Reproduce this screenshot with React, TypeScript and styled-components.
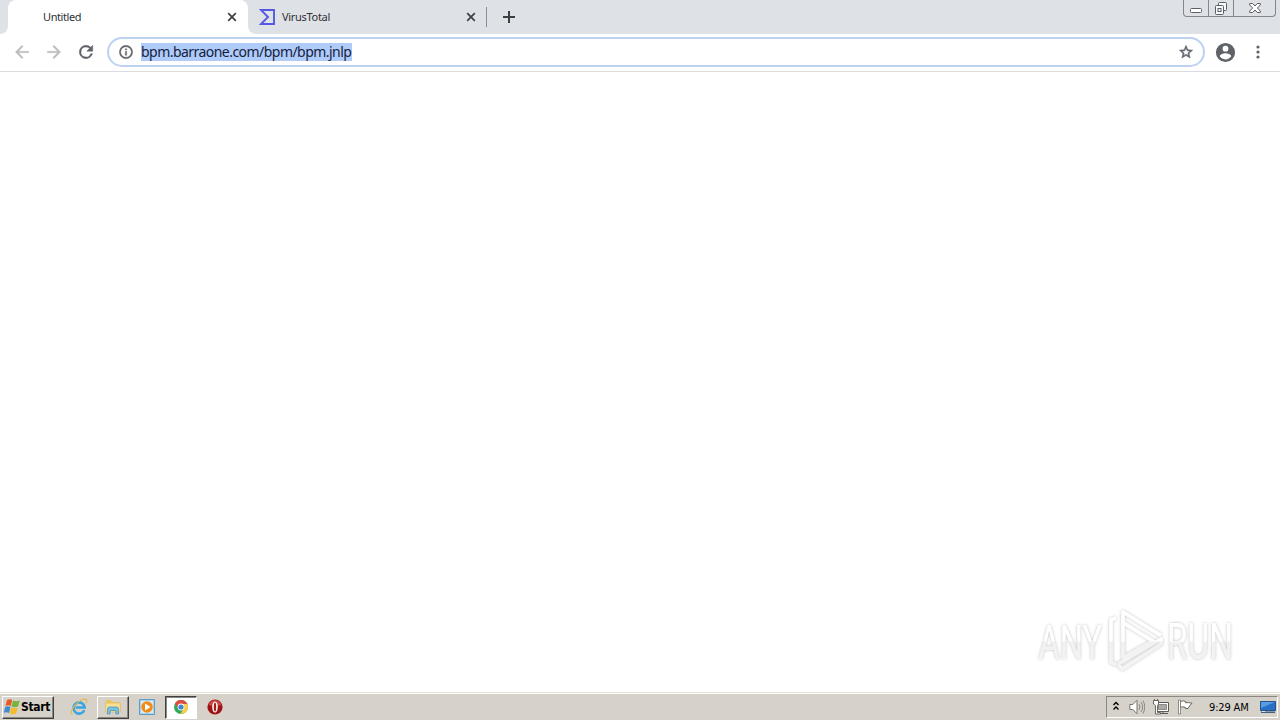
import React from 'react';
import styled, { createGlobalStyle } from 'styled-components';

const GlobalStyle = createGlobalStyle`
  * { box-sizing: border-box; }
  body { margin: 0; overflow: hidden; background: #fff; }
  svg { display: block; flex: none; }
`;

const Screen = styled.div`
  width: 1280px;
  height: 720px;
  display: flex;
  flex-direction: column;
  position: relative;
  font-family: 'Noto Sans', 'Open Sans', sans-serif;
`;

const TabStrip = styled.header`
  height: 34px;
  flex: none;
  display: flex;
  align-items: flex-start;
  background: #dee1e6;
`;

const StripEdge = styled.div`
  width: 8px;
  height: 34px;
  background: #fff;
  &::before {
    content: '';
    display: block;
    height: 34px;
    background: #dee1e6;
    border-bottom-right-radius: 8px;
  }
`;

const Tab = styled.div<{ $active?: boolean }>`
  width: ${p => (p.$active ? 240 : 239)}px;
  height: 34px;
  display: flex;
  align-items: center;
  padding: ${p => (p.$active ? '0 11px 0 35px' : '0 11px 0 11px')};
  background: ${p => (p.$active ? '#fff' : '#dee1e6')};
  border-radius: ${p => (p.$active ? '8px 8px 0 0' : '0 0 0 8px')};
`;

const InactiveBack = styled.div`
  background: linear-gradient(90deg, #fff 10px, #dee1e6 10px);
`;

const TabTitle = styled.span<{ $gap?: number; $spacing: number }>`
  flex: 1;
  margin-left: ${p => p.$gap ?? 0}px;
  font-size: 11px;
  line-height: 16px;
  letter-spacing: ${p => p.$spacing}px;
  color: #303236;
  white-space: nowrap;
`;

const TabDivider = styled.div`
  width: 1px;
  height: 20px;
  margin: 7px 15px 0 -1px;
  background: #8b8f95;
`;

const NewTab = styled.div`
  margin-top: 10px;
`;

const WindowControls = styled.div`
  display: flex;
  width: 93px;
  height: 17px;
  margin: 0 4px 0 auto;
  border: 1px solid #84878e;
  border-top: 0;
  border-radius: 0 0 4px 4px;
`;

const WindowButton = styled.div<{ $width: number }>`
  width: ${p => p.$width}px;
  display: flex;
  justify-content: center;
  border-right: 1px solid #84878e;
  &:last-child { border-right: 0; }
`;

const Toolbar = styled.div`
  height: 38px;
  flex: none;
  display: flex;
  align-items: center;
  padding: 0 12px 1px;
  background: #fff;
  border-bottom: 1px solid #dadce0;
`;

const NavButtons = styled.div`
  display: flex;
  gap: 12px;
  width: 95px;
`;

const AddressBar = styled.div`
  width: 1098px;
  height: 30px;
  display: flex;
  align-items: center;
  padding: 0 9px;
  border: 2px solid #bcd2f0;
  border-radius: 15px;
`;

const Url = styled.span`
  height: 18px;
  width: 211px;
  margin: 0 auto 0 7px;
  background: #afcbfa;
  color: #14213b;
  font-size: 14px;
  line-height: 17px;
  letter-spacing: -0.54px;
  white-space: nowrap;
`;

const ToolbarActions = styled.div`
  display: flex;
  align-items: center;
  gap: 12px;
  margin-left: 9px;
`;

const Page = styled.main`
  flex: 1;
  background: #fff;
`;

const Watermark = styled.div`
  position: absolute;
  left: 1025px;
  top: 600px;
`;

const Taskbar = styled.footer`
  height: 28px;
  flex: none;
  display: flex;
  align-items: flex-start;
  padding: 3px 2px 0;
  background: #d6d2ca;
  border-top: 1px solid #e5e2db;
  box-shadow: inset 0 1px #fff;
`;

const StartButton = styled.div`
  width: 52px;
  height: 23px;
  display: flex;
  align-items: center;
  gap: 1px;
  padding: 0 0 2px 1px;
  border: 1px solid;
  border-color: #fff #404040 #404040 #fff;
  box-shadow: inset -1px -1px #8b8882;
  font: bold 12px 'DejaVu Sans Condensed', 'DejaVu Sans', sans-serif;
  letter-spacing: -0.3px;
  color: #000;
`;

const QuickLaunch = styled.div`
  display: flex;
  align-items: center;
  gap: 2px;
  margin-left: 9px;
`;

const TaskButton = styled.div<{ $look?: 'raised' | 'pressed' }>`
  width: 32px;
  height: 23px;
  display: flex;
  align-items: center;
  justify-content: center;
  padding-bottom: 2px;
  background: ${p => (p.$look === 'pressed' ? '#fff' : 'transparent')};
  border: 1px solid;
  border-color: ${p =>
    p.$look === 'raised' ? '#fff #404040 #404040 #fff'
    : p.$look === 'pressed' ? '#404040 #fff #fff #404040'
    : 'transparent'};
  box-shadow: ${p =>
    p.$look === 'raised' ? 'inset -1px -1px #8b8882'
    : p.$look === 'pressed' ? 'inset 1px 1px #8b8882'
    : 'none'};
`;

const Tray = styled.div`
  width: 172px;
  height: 22px;
  display: flex;
  align-items: center;
  margin-left: auto;
  padding-left: 5px;
  border: 1px solid;
  border-color: #8b8882 #fff #fff #8b8882;
`;

const Chevrons = styled.div`
  padding-bottom: 3px;
`;

const TrayIcons = styled.div`
  display: flex;
  align-items: center;
  gap: 8px;
  margin-left: 9px;
`;

const Clock = styled.span`
  width: 51px;
  margin-left: 16px;
  font: 11px 'DejaVu Sans Condensed', 'DejaVu Sans', sans-serif;
  letter-spacing: -0.15px;
  color: #000;
  white-space: nowrap;
`;

const CloseIcon = () => (
  <svg width="10" height="10" viewBox="0 0 10 10">
    <path d="M1.2 1.2l7.6 7.6M8.8 1.2L1.2 8.8" stroke="#3c4043" strokeWidth="1.7" />
  </svg>
);

const VirusTotalIcon = () => (
  <svg width="17" height="16" viewBox="0 0 17 16">
    <path d="M2 1h13v14H2l7-7z" fill="none" stroke="#5459e4" strokeWidth="1.9" />
  </svg>
);

const MaterialIcon = ({ d, color = '#5f6368', size = 20, weight = 0 }: { d: string; color?: string; size?: number; weight?: number }) => (
  <svg width={size} height={size} viewBox="0 0 24 24"><path d={d} fill={color} stroke={color} strokeWidth={weight} /></svg>
);

const BACK = 'M20 11H7.83l5.59-5.59L12 4l-8 8 8 8 1.41-1.41L7.83 13H20v-2z';
const FORWARD = 'M12 4l-1.41 1.41L16.17 11H4v2h12.17l-5.58 5.59L12 20l8-8z';
const RELOAD = 'M17.65 6.35A7.96 7.96 0 0 0 12 4a8 8 0 1 0 7.73 10h-2.08A6 6 0 1 1 12 6c1.66 0 3.14.69 4.22 1.78L13 11h7V4z';
const INFO = 'M11 17h2v-6h-2v6zm1-15a10 10 0 1 0 0 20 10 10 0 0 0 0-20zm0 18a8 8 0 1 1 0-16 8 8 0 0 1 0 16zM11 9h2V7h-2z';
const STAR = 'M22 9.24l-7.19-.62L12 2 9.19 8.63 2 9.24l5.46 4.73L5.82 21 12 17.27 18.18 21l-1.63-7.03zM12 15.4l-3.76 2.27 1-4.28-3.32-2.88 4.38-.38L12 6.1l1.71 4.04 4.38.38-3.32 2.88 1 4.28z';
const PERSON = 'M12 2a10 10 0 1 0 0 20 10 10 0 0 0 0-20zm0 3a3 3 0 1 1 0 6 3 3 0 0 1 0-6zm0 14.2c-2.5 0-4.71-1.28-6-3.22.03-1.99 4-3.08 6-3.08s5.97 1.09 6 3.08A7.2 7.2 0 0 1 12 19.2z';

const WindowsFlag = () => (
  <svg width="16" height="16" viewBox="0 0 16 16">
    <path d="M3 1q3-1.5 5.2 0L6.8 7q-2.5-1.4-5.4 0z" fill="#e65a24" />
    <path d="M9 1.5q3 1.6 6.7.1L14 7.5q-3 1.4-6.5 0z" fill="#76b43c" />
    <path d="M1.2 8q2.6-1.3 5.3 0L5 14q-2.5-1.5-5.3 0z" fill="#3d8ccb" />
    <path d="M7.3 8.4q3 1.4 6.5.1L12.2 14.5q-3 1.4-6.4 0z" fill="#f6bd28" />
  </svg>
);

const ExplorerE = () => (
  <svg width="18" height="18" viewBox="0 0 18 18">
    <path d="M14.3 12.2A5.6 5.6 0 1 1 14.7 9.5H5.5" fill="none" stroke="#39a5df" strokeWidth="2.6" />
    <path d="M2.8 16Q-.5 16 3 10 7.5 3.2 13.5 1.3q5-1.1 2.6 4" fill="none" stroke="#e6b646" strokeWidth="1.2" />
  </svg>
);

const FolderIcon = () => (
  <svg width="18" height="18" viewBox="0 0 18 18">
    <path d="M2 2h5l1 2h7v3H2z" fill="#edc55c" />
    <path d="M1.5 5h14.8v9H1.5z" fill="#f8df91" stroke="#dfb95c" strokeWidth=".7" />
    <path d="M3.5 16v-5q0-2 2-2h7q2 0 2 2v5h-2.6v-3.5H6.1V16z" fill="#77c1e7" stroke="#4292bf" strokeWidth=".7" />
  </svg>
);

const MediaIcon = () => (
  <svg width="16" height="16" viewBox="0 0 16 16">
    <path d="M.5.5h15v15H.5z" fill="#a9d2ed" stroke="#5e9cc8" />
    <path d="M2 2h12v12H2z" fill="#d9edf7" />
    <circle cx="8" cy="8" r="5.8" fill="#f28b16" />
    <path d="M6 4.5L11.5 8 6 11.5z" fill="#fff" />
  </svg>
);

const ChromeIcon = () => (
  <svg width="16" height="16" viewBox="0 0 16 16">
    <circle cx="8" cy="8" r="7" fill="#34a760" />
    <path d="M8 8V5h6.3A7 7 0 0 0 2 4.5l3.4 5z" fill="#df4c3d" />
    <path d="M8 5h6.3A7 7 0 0 1 7.5 15l3.2-5.4z" fill="#fbce43" />
    <circle cx="8" cy="8" r="3.4" fill="#fff" /><circle cx="8" cy="8" r="2.6" fill="#4285d4" />
  </svg>
);

const OperaIcon = () => (
  <svg width="16" height="16" viewBox="0 0 16 16">
    <circle cx="8" cy="8" r="7.6" fill="#a01315" />
    <path d="M1.5 6a6.8 6.8 0 0 1 13 0Q8 8 1.5 6" fill="#c94a45" />
    <ellipse cx="8" cy="8" rx="2.8" ry="5.6" fill="#fff" /><ellipse cx="8" cy="8" rx="1.2" ry="4.6" fill="#a91b1b" />
  </svg>
);

const SpeakerIcon = () => (
  <svg width="16" height="16" viewBox="0 0 16 16" fill="none" stroke="#77746f">
    <path d="M.8 5.5h3L8 1.3v13.4l-4.2-4.2h-3z" fill="#fff" />
    <path d="M10 5.2q2 2.8 0 5.6M12 3.2q3.4 4.8 0 9.6M14 1.5q3.5 6.5 0 13" strokeWidth=".8" />
  </svg>
);

const NetworkIcon = () => (
  <svg width="16" height="16" viewBox="0 0 16 16" stroke="#5d5b57">
    <path d="M3.5 3.5h12v9h-12z" fill="#fff" /><path d="M5.5 5.5h8v5h-8z" fill="#aaa9a6" stroke="#8d8b87" />
    <path d="M5 14.5h10M10 12v2" />
    <path d="M.5 1.5h5V5L4.5 6.5v7h3v1.5h-5V6.5L.5 5zM1.5 0v2M4.5 0v2" fill="#fff" strokeWidth=".9" />
  </svg>
);

const FlagIcon = () => (
  <svg width="16" height="16" viewBox="0 0 16 16">
    <path d="M3.5 2.5q3-1.3 5 0v1.2q3-.4 6.5.5l-2.2 2.6L11 9.5H8.3V8.3q-2-1-4.8 0z" fill="#fff" stroke="#696762" />
    <path d="M1.5 1h2v14h-2z" fill="#fff" stroke="#77746f" strokeWidth=".8" />
  </svg>
);

const DesktopIcon = () => (
  <svg width="16" height="14" viewBox="0 0 16 14">
    <path d="M.5 1.5h15v9H.5z" fill="#2870c5" stroke="#23558d" />
    <path d="M1 2h14L1 8z" fill="#5a9ce1" />
    <path d="M1 11.5h14v1.5H1z" fill="#435e7c" /><path d="M2 11h3v1H2z" fill="#d8e8f5" />
  </svg>
);

const AnyRunMark = () => (
  <svg width="230" height="80" viewBox="0 0 230 80">
    <defs>
      <filter id="halo" x="0" y="0" width="230" height="80" filterUnits="userSpaceOnUse">
        <feDropShadow dx="0" dy="0" stdDeviation="1.5" floodColor="#777" floodOpacity=".48" />
      </filter>
      <linearGradient id="metal" x1="0" y1="20" x2="0" y2="70" gradientUnits="userSpaceOnUse">
        <stop offset=".42" stopColor="#fff" /><stop offset=".44" stopColor="#f1f1f1" /><stop offset="1" stopColor="#f5f5f5" />
      </linearGradient>
    </defs>
    <g filter="url(#halo)">
      <g fill="url(#metal)" fontFamily="Roboto, sans-serif" fontSize="49">
        <text transform="translate(13.5 59) scale(.665 1) translate(0 -59)" y="59">ANY</text>
        <text transform="translate(142 59) scale(.68 1) translate(0 -59)" y="59">RUN</text>
      </g>
      <g fill="none" stroke="url(#metal)" strokeWidth="3.6" strokeLinejoin="round">
        <path d="M91 18l-5 2v42l5 3M98 57V12l38 23.5M97 22l31 19-31 17M93 64l4 5 39-25v-5l-43 25" />
      </g>
    </g>
  </svg>
);

export default function App() {
  return (
    <Screen>
      <GlobalStyle />
      <TabStrip>
        <StripEdge />
        <Tab $active>
          <TabTitle $spacing={-0.4}>Untitled</TabTitle>
          <CloseIcon />
        </Tab>
        <InactiveBack>
          <Tab>
            <VirusTotalIcon />
            <TabTitle $gap={6} $spacing={-0.3}>VirusTotal</TabTitle>
            <CloseIcon />
          </Tab>
        </InactiveBack>
        <TabDivider />
        <NewTab>
          <svg width="14" height="14" viewBox="0 0 14 14"><path d="M7 1v12M1 7h12" stroke="#3c4043" strokeWidth="2" /></svg>
        </NewTab>
        <WindowControls>
          <WindowButton $width={25}>
            <svg width="14" height="16"><rect x="1.5" y="8.5" width="11" height="4" rx="1" fill="#fff" stroke="#5b5e66" /></svg>
          </WindowButton>
          <WindowButton $width={25}>
            <svg width="14" height="16" fill="#f7f8f9" stroke="#5b5e66">
              <rect x="4.5" y="2.5" width="8" height="8" rx="1" /><rect x="1.5" y="5.5" width="8" height="9" rx="1" /><rect x="4" y="8.5" width="3" height="3" />
            </svg>
          </WindowButton>
          <WindowButton $width={41}>
            <svg width="12" height="16"><path d="M.7 3.5h3L6 6l2.3-2.5h3V5L8.4 8l2.9 3v1.5h-3L6 10l-2.3 2.5h-3V11l2.9-3L.7 5z" fill="#fff" stroke="#5b5e66" /></svg>
          </WindowButton>
        </WindowControls>
      </TabStrip>

      <Toolbar>
        <NavButtons>
          <MaterialIcon d={BACK} color="#babcbe" weight={0.4} />
          <MaterialIcon d={FORWARD} color="#babcbe" weight={0.4} />
          <MaterialIcon d={RELOAD} weight={0.6} />
        </NavButtons>
        <AddressBar>
          <MaterialIcon d={INFO} size={16} weight={0.6} />
          <Url>bpm.barraone.com/bpm/bpm.jnlp</Url>
          <MaterialIcon d={STAR} size={16} weight={0.8} />
        </AddressBar>
        <ToolbarActions>
          <MaterialIcon d={PERSON} size={23} />
          <svg width="18" height="18" fill="#5f6368"><circle cx="9" cy="4" r="1.6" /><circle cx="9" cy="9" r="1.6" /><circle cx="9" cy="14" r="1.6" /></svg>
        </ToolbarActions>
      </Toolbar>

      <Page />
      <Watermark><AnyRunMark /></Watermark>

      <Taskbar>
        <StartButton><WindowsFlag />Start</StartButton>
        <QuickLaunch>
          <TaskButton><ExplorerE /></TaskButton>
          <TaskButton $look="raised"><FolderIcon /></TaskButton>
          <TaskButton><MediaIcon /></TaskButton>
          <TaskButton $look="pressed"><ChromeIcon /></TaskButton>
          <TaskButton><OperaIcon /></TaskButton>
        </QuickLaunch>
        <Tray>
          <Chevrons>
            <svg width="8" height="10" viewBox="0 0 8 10" fill="none" stroke="#000" strokeWidth="1.4"><path d="M1.5 4L4 1.5 6.5 4M1.5 8.5L4 6l2.5 2.5" /></svg>
          </Chevrons>
          <TrayIcons><SpeakerIcon /><NetworkIcon /><FlagIcon /></TrayIcons>
          <Clock>9:29 AM</Clock>
          <DesktopIcon />
        </Tray>
      </Taskbar>
    </Screen>
  );
}
